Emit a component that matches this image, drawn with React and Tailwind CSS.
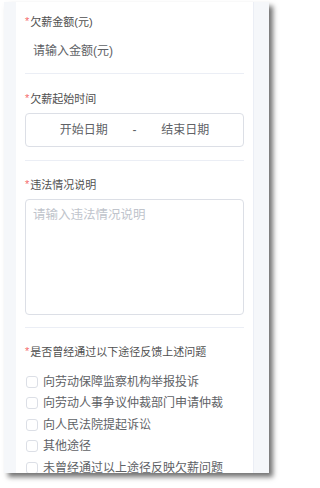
export default function App() {
  const options = [
    '向劳动保障监察机构举报投诉',
    '向劳动人事争议仲裁部门申请仲裁',
    '向人民法院提起诉讼',
    '其他途径',
    '未曾经通过以上途径反映欠薪问题',
  ]

  const Label = ({ children, className = '' }) => (
    <div className={`h-[12px] flex items-center text-[11px] leading-[12px] text-[#505050] ${className}`}>
      <span className="text-[#f56c6c] mr-[1px] self-start leading-[10px]">*</span>
      {children}
    </div>
  )

  return (
    <div
      className="w-[282px] h-[488px] bg-white pt-[2px] pl-[4px]"
      style={{ fontFamily: '"Liberation Sans", "Noto Sans CJK SC", sans-serif' }}
    >
      <div className="w-[265px] h-[471px] bg-[#f5f7fa] flex overflow-hidden shadow-[4px_4px_5px_rgba(0,0,0,0.55)]">
        <div className="ml-[12px] w-[238px] h-full bg-white border-r border-[#ebeef5] px-[9px]">
          {/* 欠薪金额 */}
          <Label className="mt-[14px]">欠薪金额(元)</Label>
          <div className="mt-[7px] h-[32px] flex items-center pl-[8px] text-[12px] text-[#606266]">
            请输入金额(元)
          </div>
          <div className="mt-[6px] h-px bg-[#ebeef5]" />

          {/* 欠薪起始时间 */}
          <Label className="mt-[19px]">欠薪起始时间</Label>
          <div className="mt-[8px] h-[34px] border border-[#dcdfe6] rounded-[4px] flex items-center px-[15px] text-[12px] text-[#606266]">
            <span className="w-[86px] text-center">开始日期</span>
            <span className="w-[16px] text-center">-</span>
            <span className="w-[86px] text-center">结束日期</span>
          </div>
          <div className="mt-[13px] h-px bg-[#ebeef5]" />

          {/* 违法情况说明 */}
          <Label className="mt-[18px]">违法情况说明</Label>
          <div className="mt-[8px] h-[116px] border border-[#dcdfe6] rounded-[4px] px-[7px] pt-[7px] text-[12.5px] leading-[16px] text-[#c0c4cc]">
            请输入违法情况说明
          </div>
          <div className="mt-[12px] h-px bg-[#ebeef5]" />

          {/* 反馈途径 */}
          <Label className="mt-[18px]">是否曾经通过以下途径反馈上述问题</Label>
          <div className="mt-[13px] flex flex-col">
            {options.map((o) => (
              <div key={o} className="h-[21.5px] flex items-center text-[12px] text-[#606266]">
                <span className="ml-[1px] w-[12px] h-[12px] border border-[#dcdfe6] rounded-[3px] bg-white" />
                <span className="ml-[5px]">{o}</span>
              </div>
            ))}
          </div>
        </div>
      </div>
    </div>
  )
}
